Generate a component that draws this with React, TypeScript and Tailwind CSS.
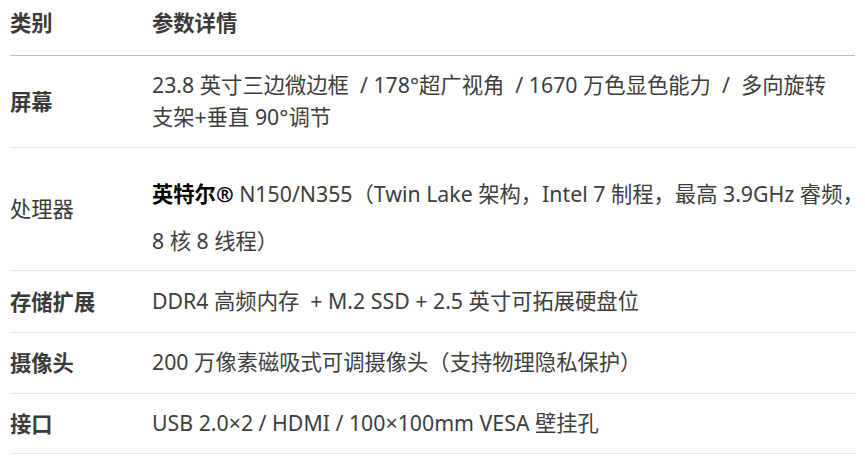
const font = { fontFamily: '"Noto Sans", "Noto Sans CJK SC", sans-serif' }

type Row = {
  label: string
  labelBold: boolean
  pad: string
  lines: React.ReactNode[]
}

const rows: Row[] = [
  {
    label: '屏幕',
    labelBold: true,
    pad: 'pt-[13px] pb-[14px] leading-[32px]',
    lines: [
      <>23.8 英寸三边微边框&nbsp; / 178°超广视角&nbsp; / 1670 万色显色能力&nbsp; /&nbsp; 多向旋转</>,
      <>支架+垂直 90°调节</>,
    ],
  },
  {
    label: '处理器',
    labelBold: false,
    pad: 'pt-[22px] pb-[6px] leading-[47px]',
    lines: [
      <>
        <strong className="font-bold text-black">英特尔®</strong> N150/N355（Twin Lake 架构，Intel 7 制程，最高 3.9GHz 睿频，
      </>,
      <>8 核 8 线程）</>,
    ],
  },
  {
    label: '存储扩展',
    labelBold: true,
    pad: 'pt-[14px] pb-[15px] leading-[32px]',
    lines: [<>DDR4 高频内存&nbsp; + M.2 SSD + 2.5 英寸可拓展硬盘位</>],
  },
  {
    label: '摄像头',
    labelBold: true,
    pad: 'pt-[13px] pb-[15px] leading-[32px]',
    lines: [<>200 万像素磁吸式可调摄像头（支持物理隐私保护）</>],
  },
  {
    label: '接口',
    labelBold: true,
    pad: 'pt-[13px] pb-[14px] leading-[32px]',
    lines: [<>USB 2.0×2 / HDMI / 100×100mm VESA 壁挂孔</>],
  },
]

export default function App() {
  return (
    <div className="w-[865px] h-[460px] bg-white overflow-hidden" style={font}>
      <table className="ml-[10px] w-[845px] table-fixed border-collapse text-[21.3px] text-[#3d3d3d]">
        <thead>
          <tr className="border-b border-[#bdbdbd]">
            <th className="w-[142px] p-0 pt-[7px] pb-[16px] text-left font-bold leading-[32px] text-[#3a3a3a]">类别</th>
            <th className="p-0 pt-[7px] pb-[16px] text-left font-bold leading-[32px] text-[#3a3a3a]">参数详情</th>
          </tr>
        </thead>
        <tbody>
          {rows.map(r => (
            <tr key={r.label} className="border-b border-[#e6e6e6]">
              <td className={`p-0 align-middle leading-[32px] text-[#3a3a3a] ${r.labelBold ? 'font-bold' : 'font-normal'}`}>
                {r.label}
              </td>
              <td className={`p-0 whitespace-nowrap ${r.pad}`}>
                {r.lines.map((l, i) => (
                  <div key={i}>{l}</div>
                ))}
              </td>
            </tr>
          ))}
        </tbody>
      </table>
    </div>
  )
}
